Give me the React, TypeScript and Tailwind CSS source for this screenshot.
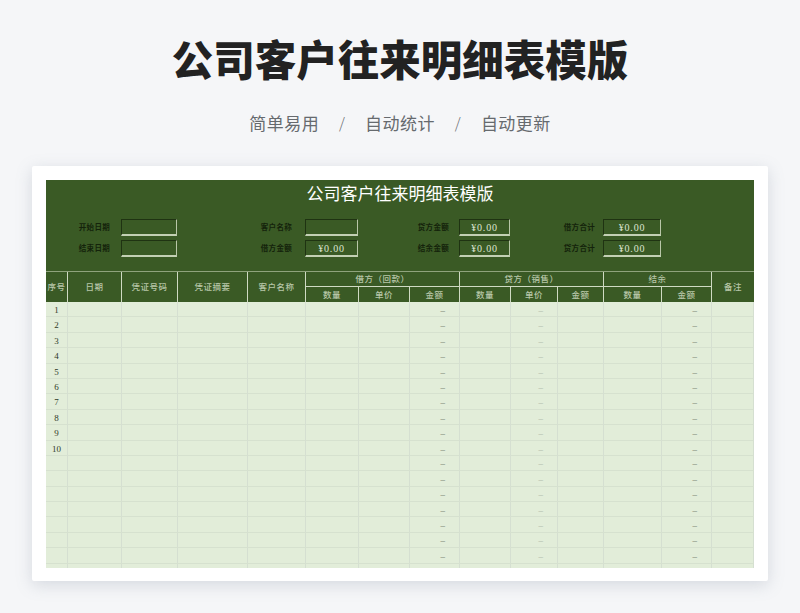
const COLS = "grid grid-cols-[21px_54px_56px_70px_58px_53px_51px_50px_51px_47px_46px_58px_50px_43px]";
const TCOLS = "grid grid-cols-[22px_54px_56px_70px_58px_53px_51px_50px_51px_47px_46px_58px_50px_42px]";
const SERIF = { fontFamily: '"Liberation Serif", "Noto Sans CJK SC", serif' };

function Box({ value, col }: { value?: string; col: string }) {
  return (
    <div className={`${col} h-[17px] border border-[#1f3312] border-r-[#b9c7a8] border-b-[#c3d0b4] border-b-2 flex items-center justify-center text-[10px] text-[#dde5d2] tracking-[0.8px]`}>
      {value}
    </div>
  );
}

function Label({ text, col, pr }: { text: string; col: string; pr: string }) {
  return (
    <div className={`${col} ${pr} h-[17px] flex items-center justify-end text-[7.5px] font-bold text-[#14230b] tracking-[0.3px]`}>
      {text}
    </div>
  );
}

const HCell = "flex items-center justify-center text-[8.5px] font-medium text-[#b7c6a8] border-r border-[#cfdac3] tracking-[0.5px]";

const bodyCols = Array.from({ length: 14 }, (_, i) => i);

function Row({ n, dash }: { n?: number; dash: boolean }) {
  return (
    <div className={`${TCOLS} h-[15.4px] shrink-0 border-b border-[#d6e1cf]`}>
      {bodyCols.map((c) => (
        <div key={c} className="border-r border-[#d5dfd1] flex items-center justify-center pt-[2px] text-[9px] text-[#2f3a28] relative">
          {c === 0 && n ? n : null}
          {dash && (c === 7 || c === 12) ? <span className="absolute right-[14px] text-[9px] text-[#5f6a5a]">–</span> : null}
          {dash && c === 9 ? <span className="absolute right-[14px] text-[9px] text-[#a5b09f]">–</span> : null}
        </div>
      ))}
    </div>
  );
}

export default function App() {
  return (
    <div className="w-[800px] h-[613px] overflow-hidden bg-[#f5f6f8] flex flex-col items-center" style={{ fontFamily: '"Noto Sans CJK SC", sans-serif' }}>
      <h1 className="mt-[29px] h-[60px] flex items-center text-[41.5px] leading-none font-black text-[#222222]">公司客户往来明细表模版</h1>
      <div className="mt-[12px] h-[44px] flex items-center text-[17px] tracking-[0.45px] text-[#666a6e]">
        <span>简单易用</span>
        <span className="mx-[19px] w-[8px] text-center font-light text-[15px]">/</span>
        <span>自动统计</span>
        <span className="mx-[19px] w-[8px] text-center font-light text-[15px]">/</span>
        <span>自动更新</span>
      </div>
      <div className="mt-[21px] w-[736px] h-[415px] bg-white p-[14px] pb-[13px] shadow-[0_4px_16px_rgba(120,130,150,0.25)] rounded-[2px]">
        <div className="w-[708px] h-[388px] overflow-hidden bg-[#e2edd9] flex flex-col" style={SERIF}>
          <div className="h-[91px] shrink-0 bg-[#3a5a25] flex flex-col">
            <div className="h-[27px] flex items-center justify-center text-[17px] leading-none text-white pt-[1px]">公司客户往来明细表模版</div>
            <div className={`${COLS} mt-[12px] gap-y-[4px]`}>
              <Label text="开始日期" col="col-span-2" pr="pr-[11px]" />
              <Box col="col-span-1" />
              <Label text="客户名称" col="col-span-2" pr="pr-[13px]" />
              <Box col="col-span-1" />
              <Label text="贷方金额" col="col-span-2" pr="pr-[10px]" />
              <Box col="col-span-1" value="¥0.00" />
              <Label text="借方合计" col="col-span-2" pr="pr-[8px]" />
              <Box col="col-span-1" value="¥0.00" />
              <div className="col-span-2" />
              <Label text="结束日期" col="col-span-2" pr="pr-[11px]" />
              <Box col="col-span-1" />
              <Label text="借方金额" col="col-span-2" pr="pr-[13px]" />
              <Box col="col-span-1" value="¥0.00" />
              <Label text="结余金额" col="col-span-2" pr="pr-[10px]" />
              <Box col="col-span-1" value="¥0.00" />
              <Label text="贷方合计" col="col-span-2" pr="pr-[8px]" />
              <Box col="col-span-1" value="¥0.00" />
              <div className="col-span-2" />
            </div>
          </div>
          <div className={`${TCOLS} grid-rows-[15px_16px] h-[31px] shrink-0 bg-[#3a5a25] border-t border-[#8fa37d]`}>
            <div className={`${HCell} row-span-2`}>序号</div>
            <div className={`${HCell} row-span-2`}>日期</div>
            <div className={`${HCell} row-span-2`}>凭证号码</div>
            <div className={`${HCell} row-span-2`}>凭证摘要</div>
            <div className={`${HCell} row-span-2`}>客户名称</div>
            <div className={`${HCell} col-span-3 border-b`}>借方（回款）</div>
            <div className={`${HCell} col-span-3 border-b`}>贷方（销售）</div>
            <div className={`${HCell} col-span-2 border-b`}>结余</div>
            <div className={`${HCell} row-span-2 border-r-0`}>备注</div>
            <div className={HCell}>数量</div>
            <div className={HCell}>单价</div>
            <div className={HCell}>金额</div>
            <div className={HCell}>数量</div>
            <div className={HCell}>单价</div>
            <div className={HCell}>金额</div>
            <div className={HCell}>数量</div>
            <div className={HCell}>金额</div>
          </div>
          {Array.from({ length: 18 }, (_, i) => (
            <Row key={i} n={i < 10 ? i + 1 : undefined} dash={i < 17} />
          ))}
        </div>
      </div>
    </div>
  );
}
